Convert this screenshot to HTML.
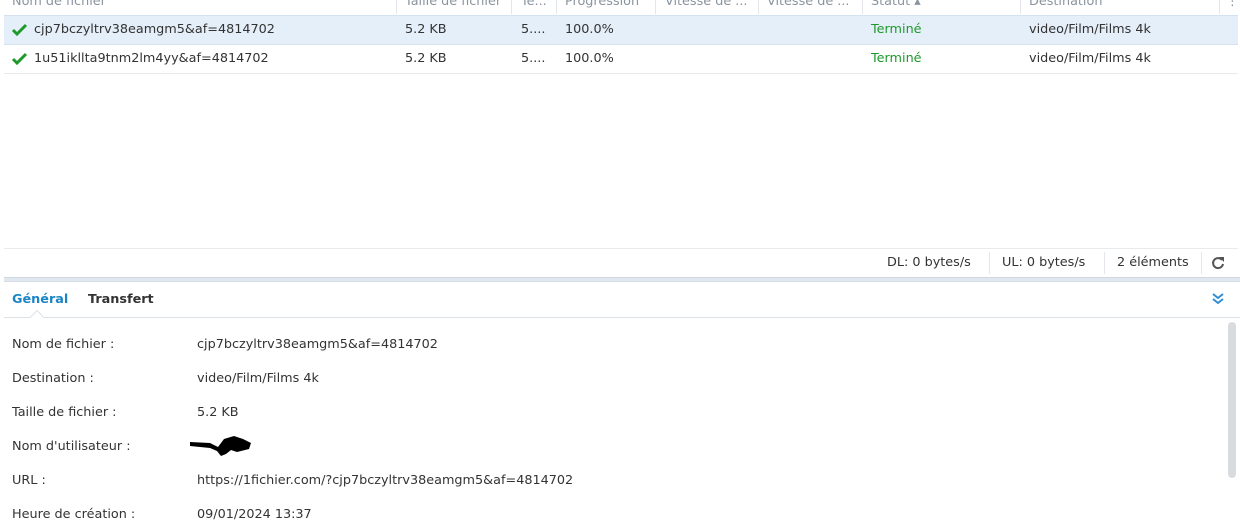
<!DOCTYPE html>
<html><head><meta charset="utf-8"><style>
*{margin:0;padding:0;box-sizing:border-box}
body{width:1240px;height:527px;overflow:hidden;background:#fff;font-family:"DejaVu Sans","Liberation Sans",sans-serif;font-size:12.8px;color:#333;position:relative}
.a{position:absolute;white-space:nowrap}
.hd{color:#8a949e}
.vl{position:absolute;width:1px;background:#e3e7eb}
.g{color:#1e9a2c}
</style></head><body>
<div class="a hd" style="left:12px;top:-6px">Nom de fichier</div>
<div class="a hd" style="left:405px;top:-6px">Taille de fichier</div>
<div class="a hd" style="left:521px;top:-6px">Te...</div>
<div class="a hd" style="left:565px;top:-6px">Progression</div>
<div class="a hd" style="left:665px;top:-6px">Vitesse de ...</div>
<div class="a hd" style="left:767px;top:-6px">Vitesse de ...</div>
<div class="a hd" style="left:871px;top:-6px">Statut ▴</div>
<div class="a hd" style="left:1029px;top:-6px">Destination</div>
<div class="a hd" style="left:1226px;top:-6px">⋮</div>
<div class="vl" style="left:396px;top:0;height:14px"></div>
<div class="vl" style="left:511px;top:0;height:14px"></div>
<div class="vl" style="left:556px;top:0;height:14px"></div>
<div class="vl" style="left:655px;top:0;height:14px"></div>
<div class="vl" style="left:758px;top:0;height:14px"></div>
<div class="vl" style="left:862px;top:0;height:14px"></div>
<div class="vl" style="left:1020px;top:0;height:14px"></div>
<div class="vl" style="left:1219px;top:0;height:14px"></div>
<div class="a" style="left:4px;top:15px;width:1234px;height:30px;background:#e5eff9;border-top:1px solid #d4e2f0;border-bottom:1px solid #d4e2f0"></div>
<div class="a" style="left:4px;top:73px;width:1234px;height:1px;background:#e8ebee"></div>
<svg class="a" style="left:11px;top:23px" width="17" height="14"><path d="M2 7l4 4 9-9" stroke="#1e9a2c" stroke-width="3" fill="none"/></svg>
<svg class="a" style="left:11px;top:52px" width="17" height="14"><path d="M2 7l4 4 9-9" stroke="#1e9a2c" stroke-width="3" fill="none"/></svg>
<div class="a" style="left:34px;top:22px">cjp7bczyltrv38eamgm5&amp;af=4814702</div>
<div class="a" style="left:405px;top:22px">5.2 KB</div>
<div class="a" style="left:521px;top:22px">5....</div>
<div class="a" style="left:565px;top:22px">100.0%</div>
<div class="a g" style="left:871px;top:22px">Terminé</div>
<div class="a" style="left:1029px;top:22px">video/Film/Films 4k</div>
<div class="a" style="left:34px;top:51px">1u51ikllta9tnm2lm4yy&amp;af=4814702</div>
<div class="a" style="left:405px;top:51px">5.2 KB</div>
<div class="a" style="left:521px;top:51px">5....</div>
<div class="a" style="left:565px;top:51px">100.0%</div>
<div class="a g" style="left:871px;top:51px">Terminé</div>
<div class="a" style="left:1029px;top:51px">video/Film/Films 4k</div>
<div class="a" style="left:4px;top:248px;width:1234px;height:1px;background:#e8ebee"></div>
<div class="a" style="left:887px;top:255px">DL: 0 bytes/s</div>
<div class="vl" style="left:989px;top:252px;height:22px"></div>
<div class="a" style="left:1002px;top:255px">UL: 0 bytes/s</div>
<div class="vl" style="left:1104px;top:252px;height:22px"></div>
<div class="a" style="left:1117px;top:255px">2 éléments</div>
<div class="vl" style="left:1201px;top:252px;height:22px"></div>
<svg class="a" style="left:1211px;top:256px" width="14" height="14"><path d="M11 4A5 5 0 1 0 12 8" stroke="#555" stroke-width="2" fill="none"/><path d="M8 1h5v5z" fill="#555"/></svg>
<div class="a" style="left:4px;top:277px;width:1236px;height:5px;background:#e1e7ee;border-top:1px solid #cfd8e2;border-bottom:1px solid #d6dee7"></div>
<div class="a" style="left:12px;top:292px;color:#1b84c4;font-weight:bold">Général</div>
<div class="a" style="left:88px;top:292px;color:#333;font-weight:bold">Transfert</div>
<div class="a" style="left:4px;top:317px;width:1236px;height:1px;background:#dde2e7"></div>
<div class="a" style="left:32px;top:312px;width:10px;height:10px;background:#fff;border-left:1px solid #dde2e7;border-top:1px solid #dde2e7;transform:rotate(45deg)"></div>
<svg class="a" style="left:1211px;top:292px" width="14" height="14"><path d="M2 2l5 4 5-4M2 7l5 4 5-4" stroke="#2f8fd0" stroke-width="2" fill="none"/></svg>
<div class="a" style="left:1228px;top:322px;width:8px;height:156px;background:#d9dcdf;border-radius:4px"></div>
<div class="a" style="left:12px;top:337px">Nom de fichier :</div>
<div class="a" style="left:197px;top:337px">cjp7bczyltrv38eamgm5&amp;af=4814702</div>
<div class="a" style="left:12px;top:371px">Destination :</div>
<div class="a" style="left:197px;top:371px">video/Film/Films 4k</div>
<div class="a" style="left:12px;top:405px">Taille de fichier :</div>
<div class="a" style="left:197px;top:405px">5.2 KB</div>
<div class="a" style="left:12px;top:439px">Nom d'utilisateur :</div>
<svg class="a" style="left:188px;top:434px" width="68" height="26"><path d="M2 8l20 1 8 4 6-8 10-3 9 3 8 4-2 6-12 3-6-2-5 4-5 2-4-5-7-3-20-2z" fill="#000"/></svg>
<div class="a" style="left:12px;top:473px">URL :</div>
<div class="a" style="left:197px;top:473px">https://1fichier.com/?cjp7bczyltrv38eamgm5&amp;af=4814702</div>
<div class="a" style="left:12px;top:507px">Heure de création :</div>
<div class="a" style="left:197px;top:507px">09/01/2024 13:37</div>
</body></html>
